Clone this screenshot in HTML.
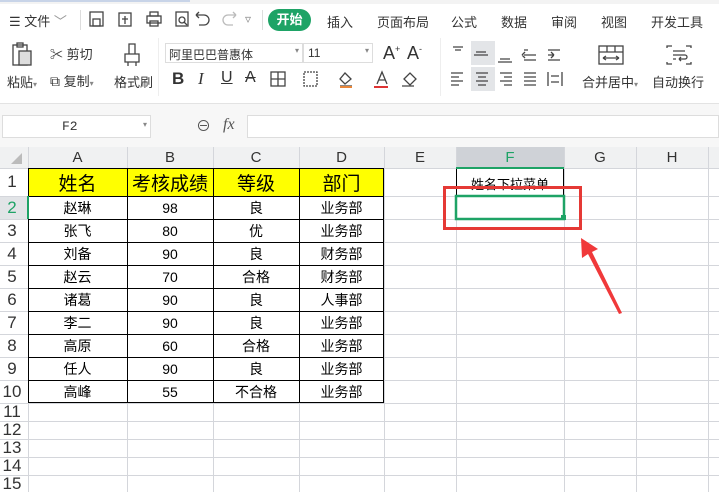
<!DOCTYPE html>
<html><head><meta charset="utf-8"><style>
*{margin:0;padding:0;box-sizing:border-box}
body{width:719px;height:492px;overflow:hidden;background:#fff;font-family:"Liberation Sans","Noto Sans CJK SC",sans-serif;position:relative;color:#333}
.a{position:absolute}
.t{font-size:12px;white-space:nowrap}
.m{font-size:13px}
.c{position:absolute;display:flex;align-items:center;justify-content:center;font-size:14px;color:#000}
.ic{position:absolute;stroke:#444;fill:none;stroke-width:1.3}
</style></head><body>
<div class="a" style="left:0;top:0;width:719px;height:4px;background:#f3f3f3"></div>
<div class="a" style="left:0;top:0;width:190px;height:2px;background:#c8d4e8"></div>
<div class="a t m" style="left:9px;top:11px">☰ 文件 <span style="color:#999">﹀</span></div>
<div class="a" style="left:80px;top:10px;width:1px;height:20px;background:#ddd"></div>
<svg class="ic" style="left:88px;top:10px" width="170" height="20">
<rect x="2" y="2" width="13" height="14"/><rect x="5" y="9" width="7" height="7"/>
<rect x="31" y="3" width="12" height="13"/><path d="M34 9h6M37 6v8"/>
<rect x="59" y="6" width="14" height="7"/><rect x="62" y="2" width="8" height="4"/><rect x="62" y="11" width="8" height="5"/>
<rect x="88" y="2" width="12" height="14"/><circle cx="94" cy="10" r="3"/><path d="M96 12l3 3"/>
<path d="M108 5h8a5 5 0 0 1 0 10h-5M108 5l3-3M108 5l3 3"/>
<path d="M148 5h-8a5 5 0 0 0 0 10h5M148 5l-3-3M148 5l-3 3" stroke="#bbb"/>
</svg>
<div class="a t" style="left:245px;top:12px;color:#888">▿</div>
<div class="a" style="left:262px;top:10px;width:1px;height:20px;background:#ddd"></div>
<div class="a t m" style="left:268px;top:9px;width:43px;height:22px;border-radius:11px;background:#1ea366;color:#fff;font-weight:bold;text-align:center;line-height:22px">开始</div>
<div class="a t m" style="left:327px;top:12px">插入</div>
<div class="a t m" style="left:377px;top:12px">页面布局</div>
<div class="a t m" style="left:451px;top:12px">公式</div>
<div class="a t m" style="left:501px;top:12px">数据</div>
<div class="a t m" style="left:551px;top:12px">审阅</div>
<div class="a t m" style="left:601px;top:12px">视图</div>
<div class="a t m" style="left:651px;top:12px">开发工具</div>
<svg class="ic" style="left:10px;top:42px" width="30" height="28"><rect x="3" y="3" width="14" height="20"/><rect x="9" y="9" width="12" height="14" fill="#ddd"/><rect x="7" y="1" width="6" height="4"/></svg>
<div class="a t m" style="left:7px;top:72px">粘贴<span style="font-size:8px;color:#888">▾</span></div>
<div class="a t m" style="left:50px;top:44px">✂ 剪切</div>
<div class="a t m" style="left:50px;top:71px"><span style="font-size:14px">⧉</span> 复制<span style="font-size:8px;color:#888">▾</span></div>
<svg class="ic" style="left:118px;top:42px" width="30" height="28"><path d="M11 2h6v10h-6zM7 12h14v8h-14zM10 20v4M18 20v4"/></svg>
<div class="a t m" style="left:114px;top:72px">格式刷</div>
<div class="a" style="left:158px;top:38px;width:1px;height:58px;background:#eee"></div>
<div class="a" style="left:165px;top:43px;width:138px;height:20px;border:1px solid #ddd"></div>
<div class="a t" style="left:169px;top:46px">阿里巴巴普惠体</div>
<div class="a t" style="left:295px;top:46px;font-size:8px;color:#888">▾</div>
<div class="a" style="left:303px;top:43px;width:70px;height:20px;border:1px solid #ddd"></div>
<div class="a t" style="left:308px;top:46px">11</div>
<div class="a t" style="left:365px;top:46px;font-size:8px;color:#888">▾</div>
<div class="a" style="left:383px;top:43px;font-size:18px">A<sup style="font-size:9px">+</sup></div>
<div class="a" style="left:407px;top:43px;font-size:18px">A<sup style="font-size:9px">-</sup></div>
<div class="a" style="left:172px;top:69px;font-size:17px;font-weight:bold">B</div>
<div class="a" style="left:198px;top:69px;font-size:17px;font-style:italic;font-family:'Liberation Serif',serif">I</div>
<div class="a" style="left:221px;top:69px;font-size:16px;text-decoration:underline">U</div>
<div class="a" style="left:245px;top:69px;font-size:16px;text-decoration:line-through">A</div>
<svg class="ic" style="left:270px;top:70px" width="160" height="20"><rect x="1" y="2" width="14" height="14"/><path d="M8 2v14M1 9h14"/><rect x="34" y="2" width="13" height="14" stroke-dasharray="2 1"/><path d="M75 3l6 6-6 5-5-5zM70 16h12" /><path d="M70 17h12" stroke="#e8863a" stroke-width="2"/><path d="M107 14l5-12 5 12M109 10h6"/><path d="M104 17h14" stroke="#d33" stroke-width="2"/><path d="M134 9l6-6 6 6-6 6zM132 16h12"/></svg>
<div class="a" style="left:440px;top:38px;width:1px;height:58px;background:#eee"></div>
<div class="a" style="left:471px;top:41px;width:24px;height:24px;background:#e3e5e8"></div>
<div class="a" style="left:471px;top:67px;width:24px;height:24px;background:#e3e5e8"></div>
<svg class="ic" style="left:448px;top:44px" width="180" height="46"><path d="M5 3h10M7 6h6M28 8h10M26 11h14M52 15h10M50 18h14M76 6h4M76 11h12M76 16h12M74 11l3-3M74 11l3 3M100 6h12M100 11h6M100 16h12M106 11l-3-3M106 11l-3 3"/><path d="M3 29h12M3 33h8M3 37h12M3 41h8M28 29h12M30 33h8M28 37h12M30 41h8M52 29h12M56 33h8M52 37h12M56 41h8M76 29h12M76 33h12M76 37h12M76 41h12M100 28v14M114 28v14M103 32h8M103 38h8"/></svg>
<svg class="ic" style="left:597px;top:44px" width="30" height="22"><rect x="2" y="2" width="24" height="18"/><path d="M2 8h24M10 2v6M18 2v6M6 14h16M6 14l3-2M6 14l3 2M22 14l-3-2M22 14l-3 2"/></svg>
<div class="a t m" style="left:582px;top:72px">合并居中<span style="font-size:8px;color:#888">▾</span></div>
<svg class="ic" style="left:665px;top:44px" width="30" height="22"><path d="M2 4V2h5M21 2h5v2M2 18v2h5M21 20h5v-2M8 7h12M8 11h12a2 2 0 0 1 0 4h-6M8 15h3M14 15l2-2M14 15l2 2"/></svg>
<div class="a t m" style="left:652px;top:72px">自动换行</div>
<div class="a" style="left:0;top:103px;width:719px;height:1px;background:#e3e3e3"></div>
<div class="a" style="left:0;top:104px;width:719px;height:43px;background:#f7f7f7"></div>
<div class="a" style="left:2px;top:115px;width:149px;height:23px;background:#fff;border:1px solid #ddd"></div>
<div class="a" style="left:62px;top:119px;font-family:'Liberation Mono',monospace;font-size:13px;color:#333">F2</div>
<div class="a t" style="left:143px;top:120px;font-size:8px;color:#888">▾</div>
<div class="a" style="left:196px;top:115px;font-size:15px;color:#555">⊖</div>
<div class="a" style="left:223px;top:116px;font-size:16px;font-style:italic;font-family:'Liberation Serif',serif;color:#555">fx</div>
<div class="a" style="left:247px;top:115px;width:472px;height:23px;background:#fff;border:1px solid #ddd"></div>
<svg class="a" style="left:0;top:147px" width="719" height="345">
<rect x="0" y="0" width="719" height="21" fill="#f0f1f2"/>
<rect x="456" y="0" width="108" height="21" fill="#cfd2d7"/>
<rect x="0" y="21" width="28" height="324" fill="#fff"/>
<rect x="0" y="49" width="28" height="23" fill="#e2e4e7"/>
<path d="M22 6v11h-11z" fill="#bbb"/>
<g stroke="#d4d6db" stroke-width="1">
<path d="M28.5 0v345M127.5 0v345M213.5 0v345M299.5 0v345M384.5 0v345M456.5 0v345M564.5 0v345M636.5 0v345M708.5 0v345"/>
<path d="M0 21.5h719M0 49.5h719M0 72.5h719M0 95.5h719M0 118.5h719M0 141.5h719M0 164.5h719M0 187.5h719M0 210.5h719M0 233.5h719M0 256.5h719M0 274.5h719M0 292.5h719M0 310.5h719M0 328.5h719"/>
</g>
<rect x="28" y="21" width="356" height="28" fill="#ffff00"/>
<g stroke="#000" stroke-width="1">
<path d="M28.5 21v235M127.5 21v235M213.5 21v235M299.5 21v235M383.5 21v235"/>
<path d="M28 21.5h356M28 49.5h356M28 72.5h356M28 95.5h356M28 118.5h356M28 141.5h356M28 164.5h356M28 187.5h356M28 210.5h356M28 233.5h356M28 255.5h356"/>
<path d="M456.5 21v28M563.5 21v28M456 21.5h108"/>
</g>
<rect x="456" y="20" width="108" height="2" fill="#1ea366"/>
<rect x="27" y="49" width="2" height="23" fill="#1ea366"/>
</svg>
<div class="c" style="left:28px;top:147px;width:99px;height:21px;font-size:15px;color:#333">A</div>
<div class="c" style="left:127px;top:147px;width:86px;height:21px;font-size:15px;color:#333">B</div>
<div class="c" style="left:213px;top:147px;width:86px;height:21px;font-size:15px;color:#333">C</div>
<div class="c" style="left:299px;top:147px;width:85px;height:21px;font-size:15px;color:#333">D</div>
<div class="c" style="left:384px;top:147px;width:72px;height:21px;font-size:15px;color:#333">E</div>
<div class="c" style="left:456px;top:147px;width:108px;height:21px;font-size:15px;color:#1ea366">F</div>
<div class="c" style="left:564px;top:147px;width:72px;height:21px;font-size:15px;color:#333">G</div>
<div class="c" style="left:636px;top:147px;width:72px;height:21px;font-size:15px;color:#333">H</div>
<div class="c" style="left:0;top:168px;width:24px;height:28px;font-size:17px;color:#333">1</div>
<div class="c" style="left:28px;top:168px;width:99px;height:28px;font-size:19px">姓名</div>
<div class="c" style="left:127px;top:168px;width:86px;height:28px;font-size:19px">考核成绩</div>
<div class="c" style="left:213px;top:168px;width:86px;height:28px;font-size:19px">等级</div>
<div class="c" style="left:299px;top:168px;width:85px;height:28px;font-size:19px">部门</div>
<div class="c" style="left:456px;top:168px;width:108px;height:28px;font-size:13px;padding-top:2px">姓名下拉菜单</div>
<div class="c" style="left:0;top:196px;width:24px;height:23px;font-size:17px;color:#1ea366">2</div>
<div class="c" style="left:0;top:219px;width:24px;height:23px;font-size:17px;color:#333">3</div>
<div class="c" style="left:0;top:242px;width:24px;height:23px;font-size:17px;color:#333">4</div>
<div class="c" style="left:0;top:265px;width:24px;height:23px;font-size:17px;color:#333">5</div>
<div class="c" style="left:0;top:288px;width:24px;height:23px;font-size:17px;color:#333">6</div>
<div class="c" style="left:0;top:311px;width:24px;height:23px;font-size:17px;color:#333">7</div>
<div class="c" style="left:0;top:334px;width:24px;height:23px;font-size:17px;color:#333">8</div>
<div class="c" style="left:0;top:357px;width:24px;height:23px;font-size:17px;color:#333">9</div>
<div class="c" style="left:0;top:380px;width:24px;height:23px;font-size:17px;color:#333">10</div>
<div class="c" style="left:0;top:403px;width:24px;height:18px;font-size:17px;color:#333">11</div>
<div class="c" style="left:0;top:421px;width:24px;height:18px;font-size:17px;color:#333">12</div>
<div class="c" style="left:0;top:439px;width:24px;height:18px;font-size:17px;color:#333">13</div>
<div class="c" style="left:0;top:457px;width:24px;height:18px;font-size:17px;color:#333">14</div>
<div class="c" style="left:0;top:475px;width:24px;height:18px;font-size:17px;color:#333">15</div>
<div class="c" style="left:28px;top:196px;width:99px;height:23px">赵琳</div><div class="c" style="left:127px;top:196px;width:86px;height:23px">98</div><div class="c" style="left:213px;top:196px;width:86px;height:23px">良</div><div class="c" style="left:299px;top:196px;width:85px;height:23px">业务部</div>
<div class="c" style="left:28px;top:219px;width:99px;height:23px">张飞</div><div class="c" style="left:127px;top:219px;width:86px;height:23px">80</div><div class="c" style="left:213px;top:219px;width:86px;height:23px">优</div><div class="c" style="left:299px;top:219px;width:85px;height:23px">业务部</div>
<div class="c" style="left:28px;top:242px;width:99px;height:23px">刘备</div><div class="c" style="left:127px;top:242px;width:86px;height:23px">90</div><div class="c" style="left:213px;top:242px;width:86px;height:23px">良</div><div class="c" style="left:299px;top:242px;width:85px;height:23px">财务部</div>
<div class="c" style="left:28px;top:265px;width:99px;height:23px">赵云</div><div class="c" style="left:127px;top:265px;width:86px;height:23px">70</div><div class="c" style="left:213px;top:265px;width:86px;height:23px">合格</div><div class="c" style="left:299px;top:265px;width:85px;height:23px">财务部</div>
<div class="c" style="left:28px;top:288px;width:99px;height:23px">诸葛</div><div class="c" style="left:127px;top:288px;width:86px;height:23px">90</div><div class="c" style="left:213px;top:288px;width:86px;height:23px">良</div><div class="c" style="left:299px;top:288px;width:85px;height:23px">人事部</div>
<div class="c" style="left:28px;top:311px;width:99px;height:23px">李二</div><div class="c" style="left:127px;top:311px;width:86px;height:23px">90</div><div class="c" style="left:213px;top:311px;width:86px;height:23px">良</div><div class="c" style="left:299px;top:311px;width:85px;height:23px">业务部</div>
<div class="c" style="left:28px;top:334px;width:99px;height:23px">高原</div><div class="c" style="left:127px;top:334px;width:86px;height:23px">60</div><div class="c" style="left:213px;top:334px;width:86px;height:23px">合格</div><div class="c" style="left:299px;top:334px;width:85px;height:23px">业务部</div>
<div class="c" style="left:28px;top:357px;width:99px;height:23px">任人</div><div class="c" style="left:127px;top:357px;width:86px;height:23px">90</div><div class="c" style="left:213px;top:357px;width:86px;height:23px">良</div><div class="c" style="left:299px;top:357px;width:85px;height:23px">业务部</div>
<div class="c" style="left:28px;top:380px;width:99px;height:23px">高峰</div><div class="c" style="left:127px;top:380px;width:86px;height:23px">55</div><div class="c" style="left:213px;top:380px;width:86px;height:23px">不合格</div><div class="c" style="left:299px;top:380px;width:85px;height:23px">业务部</div>
<svg class="a" style="left:0;top:0" width="719" height="492">
<rect x="456" y="196" width="108" height="23" fill="none" stroke="#1ea366" stroke-width="2.5"/>
<rect x="561" y="215" width="5" height="5" fill="#1ea366"/>
<rect x="444.5" y="187.5" width="136" height="41" fill="none" stroke="#e53935" stroke-width="3"/>
<path d="M581 238L598 249L592 252L622 313L619 314L588 254L582 258Z" fill="#f0393a"/>
</svg>
</body></html>
